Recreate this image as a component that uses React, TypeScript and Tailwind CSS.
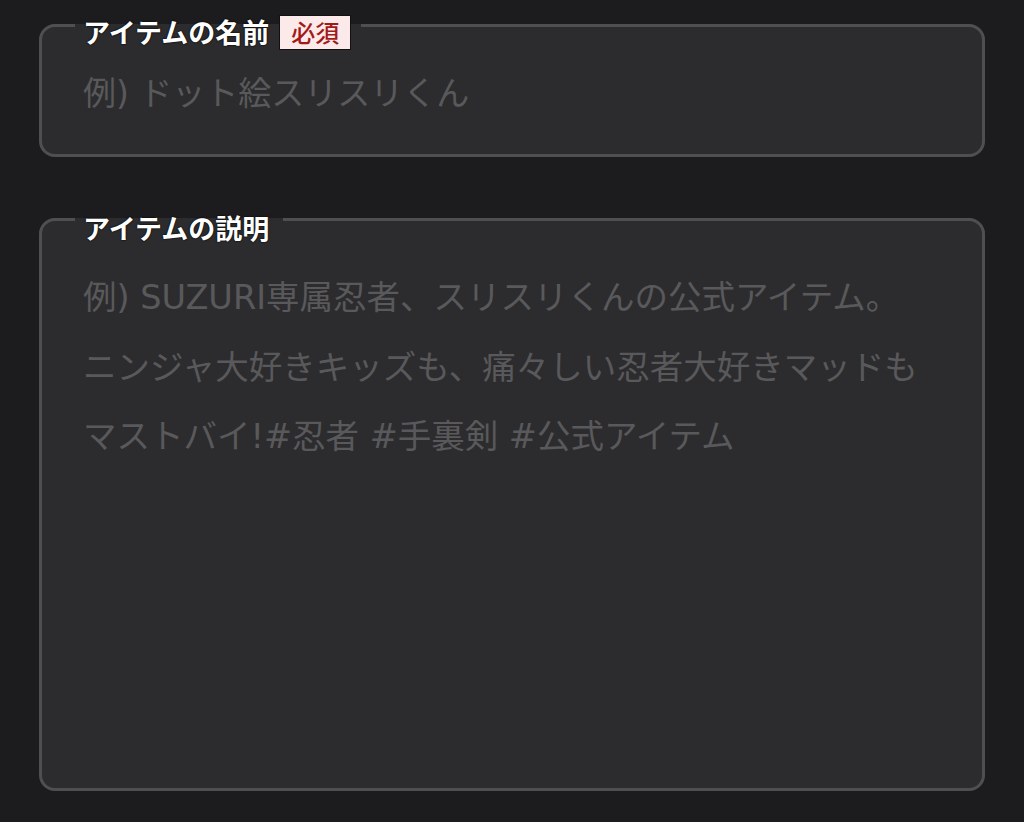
import { useState } from "react";

const FONT = "font-['Hiragino_Sans','Noto_Sans_CJK_JP',sans-serif]";
const INPUT_FONT = "font-['DejaVu_Sans','Noto_Sans_CJK_JP',sans-serif]";

function Label({ text, required }: { text: string; required?: boolean }) {
  return (
    <div className="flex items-center gap-[10px]">
      <span className="text-[27px] leading-[36px] font-bold text-white [text-shadow:0_0_2px_#000,0_0_1px_#000]">
        {text}
      </span>
      {required && (
        <span className="h-[35px] px-[11px] flex items-center bg-[#fce9e9] border border-[#111] text-[24px] leading-none font-medium text-[#a11a1a]">
          必須
        </span>
      )}
    </div>
  );
}

export default function App() {
  const [name, setName] = useState("");
  const [desc, setDesc] = useState("");

  return (
    <div className={`w-[1024px] h-[822px] bg-[#1c1c1e] px-[39px] pt-[1px] ${FONT}`}>
      {/* Item name */}
      <fieldset className="h-[156px] border-[3px] border-[#4f4f51] rounded-[16px] bg-[#2c2c2e]">
        <legend className="ml-[33px] pl-[8px] pr-[10px] pt-[13px]">
          <Label text="アイテムの名前" required />
        </legend>
        <input
          className={`block w-full bg-transparent outline-none pl-[41px] pr-[40px] mt-[24px] text-[33px] leading-[40px] text-[#c8c8ca] placeholder:text-[#59595b] ${INPUT_FONT}`}
          placeholder="例) ドット絵スリスリくん"
          value={name}
          onChange={(e) => setName(e.target.value)}
        />
      </fieldset>

      {/* Item description */}
      <fieldset className="mt-[36px] h-[598px] border-[3px] border-[#4f4f51] rounded-[16px] bg-[#2c2c2e]">
        <legend className="ml-[33px] pl-[8px] pr-[14px] pt-[17px]">
          <Label text="アイテムの説明" />
        </legend>
        <textarea
          className={`block w-full h-[520px] resize-none bg-transparent outline-none pl-[41px] pr-[30px] pt-[17px] text-[33.5px] leading-[69.5px] text-[#c8c8ca] placeholder:text-[#59595b] ${INPUT_FONT}`}
          placeholder={
            "例) SUZURI専属忍者、スリスリくんの公式アイテム。\nニンジャ大好きキッズも、痛々しい忍者大好きマッドも\nマストバイ!#忍者 #手裏剣 #公式アイテム"
          }
          value={desc}
          onChange={(e) => setDesc(e.target.value)}
        />
      </fieldset>
    </div>
  );
}
